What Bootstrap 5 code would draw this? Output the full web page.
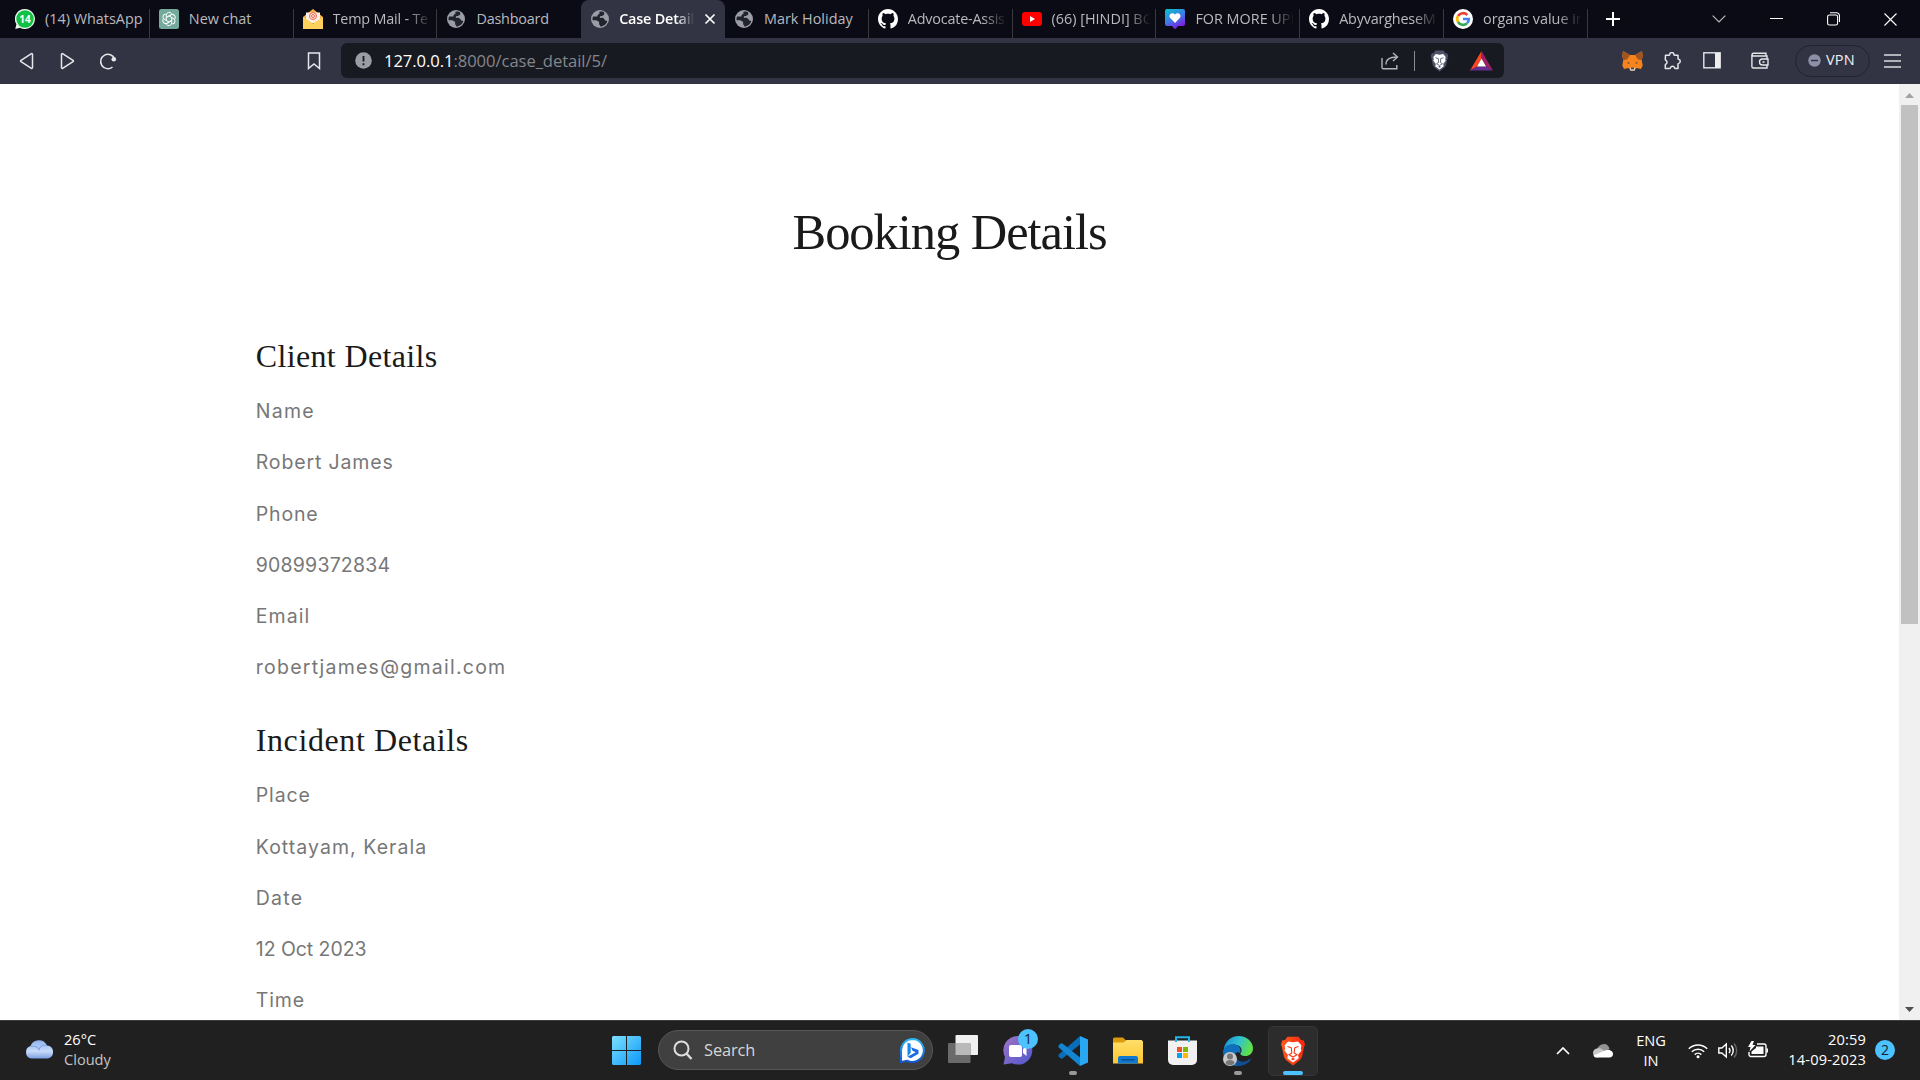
<!DOCTYPE html>
<html lang="en">
<head>
<meta charset="utf-8">
<title>Case Details</title>
<link href="https://cdn.jsdelivr.net/npm/bootstrap@5.3.0/dist/css/bootstrap.min.css" rel="stylesheet">
<style>
body{width:1920px;height:1080px;overflow:hidden;background:#fff;font-family:"Open Sans","Noto Sans",sans-serif}
svg{display:block;flex:none}
span,p,h1,h2{white-space:nowrap}
.tabstrip{height:38px;background:#0b0b15;padding-left:6px}
.btab{width:143.8px;height:38px;padding-left:9px;color:#b9b9be;font-size:14.4px;flex:none}
.btab .sep{width:1px;height:29px;background:#3a3a3e;align-self:flex-end;margin-left:auto}
.tab-title{width:101px;margin-left:10px;line-height:38px;letter-spacing:0}
.tab-title.snug{letter-spacing:-.2px}
.fade-end{-webkit-mask-image:linear-gradient(90deg,#000 74%,transparent 98%);mask-image:linear-gradient(90deg,#000 74%,transparent 98%)}
.btab.current{background:#323443;border-radius:8px 8px 0 0;color:#fff;font-weight:600}
.btab.current .tab-title{width:77px;margin-left:9px}
.add-tab{margin-left:17.5px}
.tab-search{margin-left:91px}
.win-btn{margin-left:44px}
.toolbar{height:46px;background:#323443}
.addr{width:1163px;height:35px;background:#181a21;border-radius:6px;font-size:16.6px;color:#85868c;margin:-1px 0 0 20px}
.addr b{font-weight:400;color:#fff}
.url{letter-spacing:-.06px;padding-top:1px}
.addr .rule{width:1px;height:20px;background:#8a8b90;margin:0 15px}
.vpn{width:75px;height:32px;border:1.5px solid #21232e;border-radius:16px;font-size:14.5px;color:#f0f0f2;margin:-1px 0 0 25.5px;padding-left:12px;letter-spacing:.2px}
.vpn span{padding-bottom:2px}
.viewport{height:936px}
.sheet{width:1899px;overflow:hidden}
.wrap{width:1425px;margin:0 auto;padding:118px 18.75px 0}
.wrap h1,.wrap h2{font-family:"Liberation Serif",serif;color:#1a1a1a;margin:0;font-weight:400}
.wrap h1{font-size:50.5px;line-height:60px;margin-bottom:75px;letter-spacing:-1.04px}
.wrap h2{font-size:32px;line-height:38px;margin-bottom:18.3px;letter-spacing:.35px}
.wrap h2.wide{letter-spacing:.6px}
.wrap p{font-family:Inter,sans-serif;font-size:19.5px;line-height:36px;margin-bottom:15.15px;color:#777;font-weight:400;letter-spacing:.85px}
.wrap p.num{letter-spacing:.2px}
.wrap p.date{letter-spacing:-.05px}
.wrap p.wide{letter-spacing:1.25px}
.wrap p.mid{letter-spacing:1.05px}
.block{margin-bottom:36.2px}
.block p:last-child{margin-bottom:0}
.sbar{width:21px;background:#f0f0f0}
.thumb{width:17px;height:519px;background:#c1c1c1}
.arrow-up{margin:9px 0 7px}
.arrow-down{margin-bottom:8px}
.taskbar{height:60px;background:#202020;border-top:1px solid #3b3e40;color:#fff;font-size:14.6px}
.weather{width:599px;padding-left:24px;line-height:20px}
.weather svg{margin-right:9px}
.lift{margin-top:-3px}
.tbitem{width:55px;height:59px}
.finder{width:275px;height:40px;border-radius:20px;background:#404040;border:1px solid #565656;margin:-1px 2px 0 4px;font-size:16.4px;color:#d6d6d6;letter-spacing:-.1px}
.tile{width:50px;height:50px;border-radius:5px;background:#2c2c2c;border:1px solid #363636}
.mk{bottom:5px;left:50%;transform:translateX(-50%);height:4px;width:8px;border-radius:2px;background:#999}
.mk.on{width:20px;background:#4cc2ff}
.count{width:20px;height:20px;border-radius:50%;background:#4cc2ff;color:#12232e;font-size:14px;line-height:19px;text-align:center}
.chatcount{top:8px;left:28px}
.lh20{line-height:20px}
.clock{letter-spacing:.15px;margin-left:20.5px}
</style>
<script src="https://cdn.jsdelivr.net/npm/bootstrap@5.3.0/dist/js/bootstrap.bundle.min.js"></script>
</head>
<body>
<svg width="0" height="0" class="position-absolute">
<defs>
<linearGradient id="gw" x1="0" y1="0" x2="1" y2="1"><stop offset="0" stop-color="#7de0ff"/><stop offset="1" stop-color="#0a98f7"/></linearGradient>
<linearGradient id="gc" x1="0" y1="0" x2="1" y2="1"><stop offset="0" stop-color="#a074c4"/><stop offset="1" stop-color="#4f57cf"/></linearGradient>
<linearGradient id="gf" x1="0" y1="0" x2="0" y2="1"><stop offset="0" stop-color="#ffdf6a"/><stop offset="1" stop-color="#ffc52f"/></linearGradient>
<linearGradient id="ge" x1="0" y1="0" x2="1" y2=".3"><stop offset="0" stop-color="#1a8bd8"/><stop offset=".55" stop-color="#2fc3d0"/><stop offset="1" stop-color="#5fe04a"/></linearGradient>
<linearGradient id="gb" x1="0" y1="0" x2="1" y2="0"><stop offset="0" stop-color="#ff5a1c"/><stop offset="1" stop-color="#f9260f"/></linearGradient>
<linearGradient id="gh" x1="0" y1="0" x2=".5" y2="1"><stop offset="0" stop-color="#06c5c9"/><stop offset=".55" stop-color="#3f7be8"/><stop offset="1" stop-color="#7d1de0"/></linearGradient>
<linearGradient id="gcl" x1="0" y1="0" x2="0" y2="1"><stop offset="0" stop-color="#8fb3ee"/><stop offset=".6" stop-color="#c8dbf9"/><stop offset="1" stop-color="#7d9fe3"/></linearGradient>
<linearGradient id="gbi" x1="0" y1="0" x2="0" y2="1"><stop offset="0" stop-color="#29b7ef"/><stop offset="1" stop-color="#1557d0"/></linearGradient>
<symbol id="globe" viewBox="0 0 20 20"><circle cx="10" cy="10" r="9" fill="#9a9ca6"/><path d="M10.6 2.6c-1.5 0-1.8 1.6-.8 2.2-1.4.3-2.6 1.300-2.400 2.700H3.200c-.7 1.100-.9 2.400-.5 3.700h3.100c1.700 0 1.900 1.300 3.300 1.400v2.200c0 1.200 1.200 1 1.200 2.700 3.200 0 6.200-2.300 6.900-5.500-1.600-.1-2.200-.8-2.800-1.700-.8-1.200-2.200-1.600-3.800-1.400-.9.100-1.100-1.300-.2-1.600 1.500-.4 3.900-.4 3.900-2.700 0-.8-.5-1.500-1.200-1.800-.7-.3-1.600-.2-2.500-.2z" fill="#22232f"/></symbol>
<symbol id="octo" viewBox="0 0 16 16"><path fill="#fff" d="M8 0C3.580 0 0 3.580 0 8c0 3.540 2.290 6.530 5.470 7.590.4.070.550-.170.550-.380 0-.190-.010-.820-.010-1.490-2.010.370-2.530-.490-2.690-.940-.090-.230-.480-.940-.820-1.130-.280-.150-.680-.520-.010-.530.630-.010 1.080.580 1.230.820.720 1.210 1.870.870 2.330.660.070-.520.280-.870.510-1.070-1.780-.2-3.640-.890-3.640-3.950 0-.870.310-1.590.820-2.150-.080-.2-.360-1.020.080-2.120 0 0 .670-.210 2.200.820.640-.180 1.320-.270 2-.270s1.360.090 2 .270c1.530-1.040 2.200-.820 2.200-.820.440 1.100.160 1.920.080 2.120.510.560.820 1.270.820 2.150 0 3.070-1.870 3.750-3.650 3.950.290.250.540.730.540 1.480 0 1.070-.010 1.930-.010 2.200 0 .210.150.460.550.380A8 8 0 0 0 16 8c0-4.420-3.580-8-8-8z"/></symbol>
<symbol id="lion" viewBox="0 0 26 30"><path d="M5 4 7.500.8h11L21 4l2.800.6L25 8.500l-.8 2L22 21l-2 3-7 5.400L6 24l-2-3L1.800 10.500 1 8.500 2.200 4.600z"/><path fill="#fff" d="M8 5.500l5 .8 5-.8 3.500 4-.7 3 .7 2-3.500 4.500.8 3.200L13 26.500l-5.800-4.300.8-3.200L4.500 14.500l.7-2-.7-3z"/><path fill="none" stroke="currentColor" stroke-width="1.100" d="M7.500 10.500l3.800 1.200M18.500 10.500l-3.800 1.200M11.300 11.500l.5 5.500-2.800 1.800 4 2.300 4-2.300-2.800-1.800.5-5.500"/><path fill="currentColor" d="M11 23l2-1.200 2 1.200-2 1.400z"/></symbol>
</defs>
</svg>

<header>
<div class="tabstrip d-flex">
 <div class="btab d-flex align-items-center"><svg width="20" height="20" viewBox="0 0 20 20"><path d="M10 0a10 10 0 1 1-5 18.700L.3 20l1.100-4.800A10 10 0 0 1 10 0z" fill="#e9f7ec"/><circle cx="10" cy="10" r="8.700" fill="#10c143"/><text x="10" y="13.800" text-anchor="middle" font-family="Open Sans" font-weight="700" font-size="10" fill="#fff">14</text></svg><span class="tab-title">(14) WhatsApp</span><i class="sep"></i></div>
 <div class="btab d-flex align-items-center"><svg width="20" height="20" viewBox="0 0 20 20"><rect width="20" height="20" rx="2.500" fill="#74aa9c"/><g fill="none" stroke="#fff" stroke-width="1"><path id="pet" d="M7.300 11.600V6.200a3 3 0 0 1 5.500-1.500"/><use href="#pet" transform="rotate(60 10 10)"/><use href="#pet" transform="rotate(120 10 10)"/><use href="#pet" transform="rotate(180 10 10)"/><use href="#pet" transform="rotate(240 10 10)"/><use href="#pet" transform="rotate(300 10 10)"/></g></svg><span class="tab-title">New chat</span><i class="sep"></i></div>
 <div class="btab d-flex align-items-center"><svg width="20" height="20" viewBox="0 0 20 20"><path d="M0 8 10 0l10 8v3H0z" fill="#f5b73d"/><path d="M3 3.500h14V14H3z" fill="#fdeee6"/><circle cx="10" cy="7" r="3.500" fill="none" stroke="#f0644a" stroke-width="1"/><circle cx="10" cy="7" r="1.500" fill="none" stroke="#f0644a"/><path d="M0 8l10 6.500L20 8v12H0z" fill="#ffd15c"/></svg><span class="tab-title snug fade-end">Temp Mail - Te</span><i class="sep"></i></div>
 <div class="btab d-flex align-items-center"><svg width="20" height="20"><use href="#globe"/></svg><span class="tab-title snug">Dashboard</span></div>
 <div class="btab current d-flex align-items-center"><svg width="20" height="20"><use href="#globe"/></svg><span class="tab-title snug fade-end">Case Detail</span><svg class="ms-auto" style="margin-right:9px" width="12" height="12" viewBox="0 0 12 12"><path d="M1.500 1.500l9 9M10.500 1.500l-9 9" stroke="#fff" stroke-width="1.700"/></svg></div>
 <div class="btab d-flex align-items-center"><svg width="20" height="20"><use href="#globe"/></svg><span class="tab-title">Mark Holiday</span><i class="sep"></i></div>
 <div class="btab d-flex align-items-center"><svg width="20" height="20"><use href="#octo"/></svg><span class="tab-title snug fade-end">Advocate-Assis</span><i class="sep"></i></div>
 <div class="btab d-flex align-items-center"><svg width="20" height="20" viewBox="0 0 20 20"><rect y="3" width="20" height="14" rx="3" fill="#f00"/><path d="M8 7l5 3-5 3z" fill="#fff"/></svg><span class="tab-title fade-end">(66) [HINDI] BG</span><i class="sep"></i></div>
 <div class="btab d-flex align-items-center"><svg width="20" height="20" viewBox="0 0 20 20"><path d="M2 0h16a2 2 0 0 1 2 2v13a2 2 0 0 1-2 2h-5l-3 3.500L7 17H2a2 2 0 0 1-2-2V2a2 2 0 0 1 2-2z" fill="url(#gh)"/><path d="M10 14 5 8.800C3 6 7 2.500 10 5.500c3-3 7 .5 5 3.300z" fill="#fff"/></svg><span class="tab-title fade-end">FOR MORE UPI</span><i class="sep"></i></div>
 <div class="btab d-flex align-items-center"><svg width="20" height="20"><use href="#octo"/></svg><span class="tab-title snug fade-end">AbyvargheseM</span><i class="sep"></i></div>
 <div class="btab d-flex align-items-center"><svg width="20" height="20" viewBox="0 0 20 20"><circle cx="10" cy="10" r="10" fill="#fff"/><g fill="none" stroke-width="2.600"><path d="M14.300 6A5.900 5.900 0 0 0 5 7" stroke="#ea4335"/><path d="M5 7a5.900 5.900 0 0 0 0 6" stroke="#fbbc05"/><path d="M5 13a5.900 5.900 0 0 0 8.900 1.400" stroke="#34a853"/><path d="M13.900 14.400A5.900 5.900 0 0 0 15.800 10H10" stroke="#4285f4"/></g></svg><span class="tab-title fade-end">organs value in</span><i class="sep"></i></div>
 <div class="d-flex align-items-center">
  <svg class="add-tab" width="16" height="16" viewBox="0 0 16 16"><path d="M8 1v14M1 8h14" stroke="#fff" stroke-width="2"/></svg>
  <svg class="tab-search" width="14" height="8" viewBox="0 0 14 8"><path d="M.7.700 7 7 13.300.700" fill="none" stroke="#bbb" stroke-width="1.200"/></svg>
  <svg class="win-btn" width="13" height="2"><path d="M0 .5h13" stroke="#fff"/></svg>
  <svg class="win-btn" width="13" height="14" viewBox="0 0 13 14"><rect x=".6" y="3" width="10" height="10" rx="1.800" fill="none" stroke="#fff" stroke-width="1.100"/><path d="M3 .7h6.500a3 3 0 0 1 3 3V10" fill="none" stroke="#fff" stroke-width="1.100"/></svg>
  <svg class="win-btn" width="13" height="13" viewBox="0 0 13 13"><path d="M.5.500l12 12M12.500.500l-12 12" stroke="#fff" stroke-width="1.100"/></svg>
 </div>
</div>
<div class="toolbar d-flex align-items-center">
 <svg style="margin-left:19px" width="15" height="18" viewBox="0 0 15 18"><path d="M13.500 2.600v12.800c0 1-.8 1.300-1.500.7L2 9.700c-.6-.4-.6-1 0-1.400l10-6.400c.7-.6 1.500-.3 1.500.7z" fill="none" stroke="#e6e6ea" stroke-width="1.500"/></svg>
 <svg style="margin-left:26px" width="15" height="18" viewBox="0 0 15 18"><path d="M1.500 2.600v12.800c0 1 .8 1.300 1.500.7l10-6.400c.6-.4.6-1 0-1.400L3 1.900c-.7-.6-1.500-.3-1.500.7z" fill="none" stroke="#e6e6ea" stroke-width="1.500"/></svg>
 <svg style="margin:-1px 0 0 24px" width="18" height="18" viewBox="0 0 18 18"><path d="M13.500 15A7.200 7.200 0 1 1 15.600 7" fill="none" stroke="#e6e6ea" stroke-width="1.500"/><circle cx="14.800" cy="7.300" r="2.300" fill="#e6e6ea"/></svg>
 <svg style="margin-left:190px" width="14" height="18" viewBox="0 0 14 18"><path d="M1.500 1h11v15.500L7 12l-5.500 4.500z" fill="none" stroke="#e6e6ea" stroke-width="1.500"/></svg>
 <div class="addr d-flex align-items-center">
  <svg style="margin:0 12px 0 14px" width="17" height="17" viewBox="0 0 17 17"><circle cx="8.500" cy="8.500" r="8.300" fill="#9b9ca6"/><path d="M8.500 4v5.500M8.500 11.200v2" stroke="#181a21" stroke-width="1.800"/></svg>
  <span class="url"><b>127.0.0.1</b>:8000/case_detail/5/</span>
  <svg class="ms-auto" width="18" height="18" viewBox="0 0 18 18" fill="none" stroke="#b5b6bb" stroke-width="1.400"><path d="M1 6v9.500c0 .8.500 1.300 1.300 1.300h13.500V13"/><path d="M5 12.500C5 8 8 5 16 5M12 1l4.500 4-4.500 4"/></svg>
  <i class="rule"></i>
  <svg width="19" height="22" viewBox="0 0 26 30" fill="#4e5167" color="#4e5167"><use href="#lion"/></svg>
  <svg style="margin:0 11px 0 21px" width="23" height="20" viewBox="0 0 23 20"><path d="M11.500 0 0 19.500l7-4 4.500-8z" fill="#ff4724"/><path d="M11.500 0 23 19.500l-7-4-4.500-8z" fill="#9e1f63"/><path d="M0 19.500h23l-7-4H7z" fill="#662d91"/><path d="M11.500 7.500l4.500 8H7z" fill="#fff"/></svg>
 </div>
 <svg style="margin-left:118px" width="21" height="20" viewBox="0 0 21 20"><path d="M1 0l7 4h5l7-4 .7 5-1 4 1 5.500L19 18l-4.500-1-2 2.500h-4L6.500 17 2 18 .3 14.500l1-5.500-1-4z" fill="#f5841f"/><path d="M1 0l7 4-3 4.500-3.800.5-.9-4zM20 0l-7 4 3 4.500 3.800.5.9-4z" fill="#a3551f"/><path d="M8.500 16.500h4l.5 2-.5 1.200h-4L8 18.500z" fill="#d8cfc7"/><path d="M9 16.500h3v1.700H9zM5.500 11l2.500 1-2 .8zM15.500 11l-2.500 1 2 .8z" fill="#4a3a30"/></svg>
 <svg style="margin-left:19.500px" width="18" height="18" viewBox="0 0 18 18"><path d="M2.500 3.300h3.700c.4 0 .5-.3.500-.7a2.100 2.100 0 0 1 4.200 0c0 .4.100.7.500.7h3.600V6.500c0 .4.200.6.700.7a2.200 2.200 0 0 1 0 4.200c-.5.100-.7.300-.7.700v4.400h-2.700c-.4 0-.5-.2-.7-.6a2.200 2.200 0 0 0-4.200 0c-.2.400-.3.600-.7.600H2.300V13c0-.4.200-.5.600-.8a2.200 2.200 0 0 0 0-3.800c-.4-.2-.6-.4-.6-.9z" fill="none" stroke="#e6e6ea" stroke-width="1.500" stroke-linejoin="round"/></svg>
 <svg style="margin:-1px 0 0 22.500px" width="18" height="17" viewBox="0 0 18 17"><rect x=".8" y=".8" width="16.400" height="15" fill="none" stroke="#e6e6ea" stroke-width="1.400"/><path d="M12 1h5v15h-5z" fill="#eee"/></svg>
 <svg style="margin:-1px 0 0 30px" width="18" height="17" viewBox="0 0 18 17" fill="none" stroke="#e6e6ea" stroke-width="1.400"><path d="M15 4V1.200H2.300C.7 1.200.7 4 2.300 4H16v3M.9 2.500v12c0 1 .6 1.500 1.500 1.500H16v-3"/><path d="M17 7h-5.500a3 3 0 0 0 0 6H17zM11.500 10h2"/></svg>
 <div class="vpn d-flex align-items-center"><svg style="margin-right:5.500px" width="13" height="13" viewBox="0 0 13 13"><circle cx="6.500" cy="6.500" r="6.200" fill="#8f90a8"/><path d="M3 6.500h7" stroke="#323443" stroke-width="1.500"/></svg><span>VPN</span></div>
 <svg style="margin-left:14.500px" width="17" height="14" viewBox="0 0 17 14"><path d="M0 1h17M0 7h17M0 13h17" stroke="#dcdce0" stroke-width="1.400"/></svg>
</div>
</header>

<main class="viewport d-flex">
 <div class="sheet">
  <div class="wrap">
   <h1 class="text-center">Booking Details</h1>
   <section class="block">
    <h2>Client Details</h2>
    <p class="wide">Name</p>
    <p>Robert James</p>
    <p>Phone</p>
    <p class="num">90899372834</p>
    <p class="mid">Email</p>
    <p class="wide">robertjames@gmail.com</p>
   </section>
   <section class="block">
    <h2 class="wide">Incident Details</h2>
    <p>Place</p>
    <p class="mid">Kottayam, Kerala</p>
    <p class="wide">Date</p>
    <p class="date">12 Oct 2023</p>
    <p>Time</p>
   </section>
  </div>
 </div>
 <div class="sbar d-flex flex-column align-items-center">
  <svg class="arrow-up" width="9" height="5"><path d="M4.500 0 9 5H0z" fill="#a3a3a3"/></svg>
  <div class="thumb"></div>
  <svg class="arrow-down mt-auto" width="9" height="5"><path d="M4.500 5 9 0H0z" fill="#505050"/></svg>
 </div>
</main>

<footer class="taskbar d-flex align-items-center">
 <div class="weather lift d-flex align-items-center">
  <svg width="31" height="20" viewBox="0 0 31 20"><path d="M7 19.500a6.500 6.500 0 0 1-.5-12.500A9 9 0 0 1 23 6.500a6.600 6.600 0 0 1 1 13z" fill="url(#gcl)"/><path d="M7 7.500c4-1 7 1 8 3 1-3 4-5 8-4" fill="none" stroke="#7fa4e6" stroke-width="1.200"/></svg>
  <div><div>26°C</div><div style="color:#c4c4c4">Cloudy</div></div>
 </div>
 <div class="tbitem d-flex align-items-center justify-content-center"><svg width="29" height="29" viewBox="0 0 29 29"><path d="M1 0h13v14H0V1zM15 0h13l1 1v13H15zM0 15h14v14H1l-1-1zM15 15h14v13l-1 1H15z" fill="url(#gw)"/></svg></div>
 <div class="finder d-flex align-items-center">
  <svg style="margin-left:14px" width="20" height="20" viewBox="0 0 20 20"><circle cx="8.500" cy="8.500" r="7" fill="none" stroke="#ddd" stroke-width="2"/><path d="M13.500 13.500l5 5.500" stroke="#ddd" stroke-width="2.400"/></svg>
  <span style="margin-left:11px">Search</span>
  <svg class="ms-auto" style="margin-right:7px" width="25" height="25" viewBox="0 0 25 25"><path d="M12.500 1A11.500 11.500 0 1 1 7 22.700L1 24V12.500A11.500 11.500 0 0 1 12.500 1z" fill="#fff" stroke="url(#gbi)" stroke-width="2"/><path d="M7.500 4.500l3.200 1.200v9l-3.200 4z" fill="#1b86ee"/><path d="M7.500 18.700l8.200-4.500-3.200-1.500-1.500-3.500 7.500 2.800v3.800l-7.800 4.500z" fill="#1b6be0"/></svg>
 </div>
 <div class="tbitem d-flex align-items-center justify-content-center"><svg class="mb-1" width="30" height="28" viewBox="0 0 30 28"><rect x="7.500" y="0" width="22.500" height="20" rx="1" fill="#f0f0f0"/><rect x="0" y="8" width="22.500" height="20" rx="1" fill="#6a6a6a"/><path d="M7.500 8h15v12h-15z" fill="#b9b9b9"/></svg></div>
 <div class="tbitem d-flex align-items-center justify-content-center position-relative"><svg width="30" height="29" viewBox="0 0 30 29"><path d="M15 0a14.300 14.300 0 0 1 0 28.600 14 14 0 0 1-6-1.300L.5 28.500 2 21A14.300 14.300 0 0 1 15 0z" fill="url(#gc)"/><rect x="6" y="9" width="13" height="12" rx="2" fill="#fff"/><path d="M20 13l3.500-3v10L20 17z" fill="#fff"/></svg><span class="count chatcount position-absolute">1</span></div>
 <div class="tbitem d-flex align-items-center justify-content-center position-relative"><svg width="30" height="30" viewBox="0 0 30 30"><path d="M22 0v8.500L4.500 22.500 3 22.700.5 20.500v-1.700z" fill="#0a6db8"/><path d="M22 30v-8.500L4.500 7.500 3 7.300.5 9.500v1.700z" fill="#1286d2"/><path d="M22 0l8 3.500v23L22 30z" fill="#2aa7f2"/></svg><i class="mk position-absolute"></i></div>
 <div class="tbitem d-flex align-items-center justify-content-center"><svg width="30" height="27" viewBox="0 0 30 27"><path d="M0 2a1.500 1.500 0 0 1 1.500-1.500H10L13 3.500V8H0z" fill="#dc9b0a"/><path d="M0 5.500h10.500l3-2.500H28.500L30 4.500V26.500H0z" fill="url(#gf)"/><path d="M5 26.500V21a2 2 0 0 1 2-2h16a2 2 0 0 1 2 2v5.500z" fill="#0f78cf"/><path d="M8.500 22.800h13" stroke="#064a8c" stroke-width="1.400"/></svg></div>
 <div class="tbitem d-flex align-items-center justify-content-center"><svg width="29" height="29" viewBox="0 0 29 29"><path d="M0 4.500h29V24a5 5 0 0 1-5 5H5a5 5 0 0 1-5-5z" fill="#f1f1f1"/><path d="M8 6V1.200h13V6" fill="none" stroke="#22b5e8" stroke-width="2"/><path d="M9 11h5v5H9z" fill="#f25022"/><path d="M15 11h5v5h-5z" fill="#7fba00"/><path d="M9 17h5v5H9z" fill="#00a4ef"/><path d="M15 17h5v5h-5z" fill="#ffb900"/></svg></div>
 <div class="tbitem d-flex align-items-center justify-content-center position-relative"><svg width="30" height="30" viewBox="0 0 30 30"><path d="M1 12C3 4 9 0 15.500 0 24 0 30 6 30 12.500c0 5-4 7.500-7.500 7.500-4 0-5.500-1.500-5-2.700 2-2.300 1.500-6.800-3.500-8.300C9 7.500 4 9 1 14z" fill="url(#ge)"/><path d="M0 15.500C1 10 7 7.500 12 8.500c5 1.200 6.500 5 5 8.500-3-2-7 1-4 6 2 3.500 6 5.500 9 4.500A14.500 14.500 0 0 1 15 30C6 30 0 23.500 0 15.500z" fill="#1170bd"/><path d="M12.500 17c-1 6 4.500 9.500 9 8.500 2.500-.5 4.500-2 5.500-2.500.8-.2 1 .3.800.8C25 28 20 30 15 30c-5-3-6-9-2.500-13z" fill="#124e93"/><circle cx="7" cy="23" r="7" fill="#c9c9c9"/><circle cx="7" cy="20.500" r="3" fill="#777"/><path d="M2.500 27c0-4 9-4 9 0-2 3-7 3-9 0z" fill="#777"/></svg><i class="mk position-absolute"></i></div>
 <div class="tbitem d-flex align-items-center justify-content-center position-relative"><div class="tile d-flex align-items-center justify-content-center"><svg width="26" height="30" viewBox="0 0 26 30" fill="url(#gb)" color="#f83a14"><use href="#lion"/></svg></div><i class="mk on position-absolute"></i></div>
 <div class="ms-auto d-flex align-items-center" style="padding-right:25px">
  <svg width="14" height="8" viewBox="0 0 14 8"><path d="M1 7l6-6 6 6" fill="none" stroke="#fff" stroke-width="1.700"/></svg>
  <svg style="margin-left:23px" width="20" height="14" viewBox="0 0 20 14"><path d="M3 9C3 4 7 0 11 0c3 0 5 2 5.500 5z" fill="#929292"/><path d="M4.500 13.500a4.500 4.500 0 0 1 0-9c2-.5 4 0 5.500 1.500l7 3z" fill="#c8c8c8"/><path d="M3 13.500c-1 0-2-1-2.500-2L13 6c3-1 7 1 7 4 0 2-1.500 3.500-3.500 3.500z" fill="#fff"/></svg>
  <div class="text-center lh20" style="margin:-1px 0 0 23px"><div>ENG</div><div>IN</div></div>
  <svg style="margin-left:22px" width="20" height="16" viewBox="0 0 20 16" fill="none" stroke="#fff" stroke-width="1.500"><path d="M.8 5.800a13 13 0 0 1 18.400 0M3.800 8.800a8.800 8.800 0 0 1 12.400 0M6.700 11.600a4.700 4.700 0 0 1 6.600 0"/><circle cx="10" cy="13.800" r="1.500" fill="#fff" stroke="none"/></svg>
  <svg style="margin:-1px 0 0 10px" width="20" height="17" viewBox="0 0 20 17" fill="none" stroke="#fff" stroke-width="1.400"><path d="M.8 6v5h3l4.500 4V2L3.800 6z"/><path d="M11 6a4 4 0 0 1 0 5M13.300 3.500a7.500 7.500 0 0 1 0 10"/><path d="M16 1.500a10.500 10.500 0 0 1 0 14" stroke="#666"/></svg>
  <svg style="margin:-2px 0 0 10px" width="20" height="17" viewBox="0 0 20 17"><path d="M9 3h7a2 2 0 0 1 2 2v8.500a2 2 0 0 1-2 2H3a2 2 0 0 1-2-2V11" fill="none" stroke="#fff" stroke-width="1.400"/><path d="M8 5.500h7.500V13H3.500v-2.500L8 7zM18.500 7.500H20v4h-1.500z" fill="#fff"/><path d="M3.500 0 0 6h2.500L1.500 10.500 7.500 4H4.500L6 0z" fill="#fff"/></svg>
  <div class="clock lift text-end lh20"><div>20:59</div><div>14-09-2023</div></div>
  <span class="count" style="margin:-1px 0 0 9px">2</span>
 </div>
</footer>
</body>
</html>
